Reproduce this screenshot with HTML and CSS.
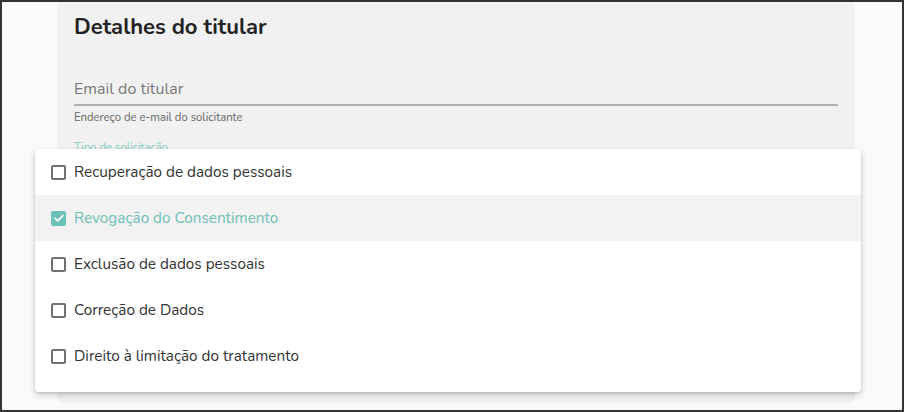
FILE: index.html
```html
<!DOCTYPE html>
<html lang="pt">
<head>
<meta charset="utf-8">
<link rel="stylesheet" href="styles.css">
</head>
<body>
<div class="frame">
  <div class="panel">
    <h2 class="title">Detalhes do titular</h2>
    <div class="field">
      <div class="input">Email do titular</div>
      <div class="helper">Endereço de e-mail do solicitante</div>
    </div>
    <div class="select-label">Tipo de solicitação</div>
  </div>
  <ul class="menu">
    <li class="item"><span class="box"></span><span class="label">Recuperação de dados pessoais</span></li>
    <li class="item selected"><span class="box checked"><svg viewBox="0 0 16 16"><path d="M3.6 8.4 L6.6 11.2 L12.4 5.2" fill="none" stroke="#fff" stroke-width="2" stroke-linecap="round" stroke-linejoin="round"/></svg></span><span class="label">Revogação do Consentimento</span></li>
    <li class="item"><span class="box"></span><span class="label">Exclusão de dados pessoais</span></li>
    <li class="item"><span class="box"></span><span class="label">Correção de Dados</span></li>
    <li class="item"><span class="box"></span><span class="label">Direito à limitação do tratamento</span></li>
  </ul>
</div>
</body>
</html>
```
FILE: styles.css
```css
* { box-sizing: border-box; }
html, body { margin: 0; padding: 0; }
body {
  font-family: "Nunito", "Lato", "Open Sans", sans-serif;
  color: #333;
}
.frame {
  position: relative;
  width: 904px;
  height: 412px;
  border: 2px solid #333;
  background: #fafafa;
  overflow: hidden;
}
.panel {
  margin-left: 55px;
  width: 798px;
  height: 401px;
  background: #f1f1f1;
  border-radius: 0 0 5px 5px;
  padding: 0 17px;
}
.title {
  margin: 0;
  padding-top: 11px;
  font-size: 22px;
  line-height: 28px;
  font-weight: 700;
  color: #222;
}
.field { margin-top: 38px; }
.input {
  font-size: 16px;
  line-height: 20px;
  color: #777;
  padding-bottom: 5px;
  border-bottom: 2px solid #b0b0b0;
}
.helper {
  margin-top: 5px;
  font-size: 11.3px;
  line-height: 14px;
  color: #666;
}
.select-label {
  margin-top: 16px;
  font-size: 11.3px;
  line-height: 14px;
  color: #7ecbc4;
}
.menu {
  position: absolute;
  left: 33px;
  top: 147px;
  width: 826px;
  height: 243px;
  margin: 0;
  padding: 0;
  list-style: none;
  background: #fff;
  border-radius: 4px;
  box-shadow: 0 3px 6px rgba(0,0,0,0.18), 0 1px 3px rgba(0,0,0,0.12);
}
.item {
  display: flex;
  align-items: center;
  gap: 8px;
  height: 46px;
  padding-left: 16px;
  font-size: 15.3px;
  color: #333;
}
.item.selected {
  background: #f2f2f2;
  color: #6dc0b9;
}
.box {
  width: 15px;
  height: 15px;
  border: 2px solid #707070;
  border-radius: 2px;
  display: flex;
  align-items: center;
  justify-content: center;
  flex: none;
}
.box.checked {
  background: #6cc1ba;
  border-color: #6cc1ba;
}
.box svg { width: 14px; height: 14px; flex: none; }
```
